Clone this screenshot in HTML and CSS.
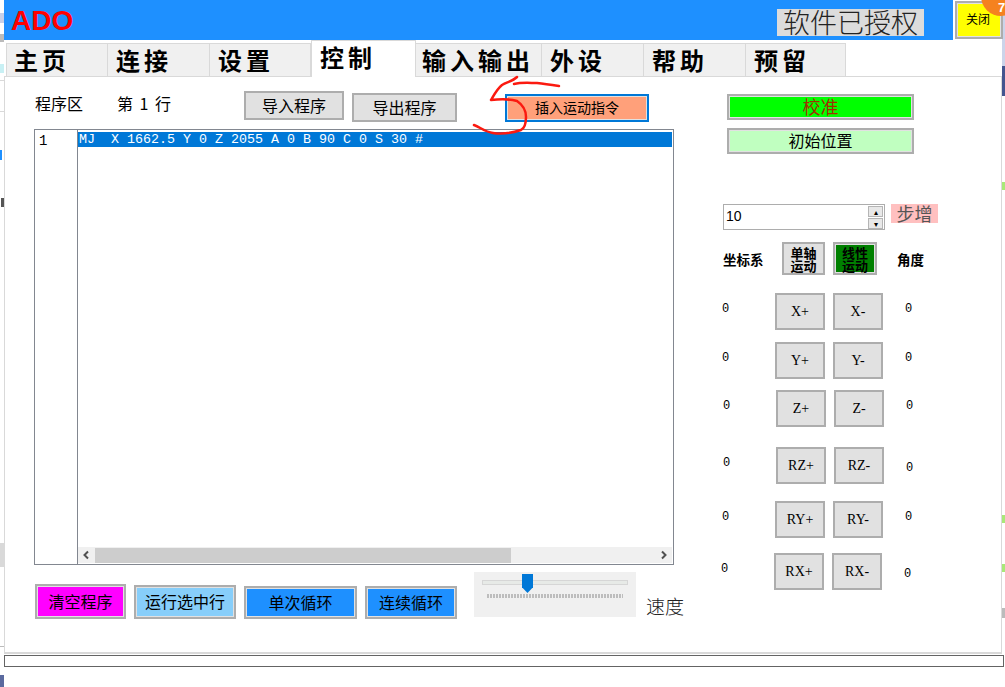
FILE: index.html
```html
<!DOCTYPE html>
<html lang="zh-CN">
<head>
    <meta charset="UTF-8">
    <title>ADO</title>
    <link rel="stylesheet" href="styles.css">
</head>
<body>
    <svg class="strip strip-left" width="4" height="687">
        <rect y="13" width="4" height="10" fill="#c8d0e8"/>
        <rect y="34" width="4" height="8" fill="#bbbbbb"/>
        <rect y="64" width="4" height="9" fill="#c8f0f4"/>
        <rect y="80" width="4" height="1" fill="#d9d9d9"/>
        <rect y="111" width="4" height="1" fill="#d9d9d9"/>
        <rect y="150" width="2" height="10" fill="#1e90ff"/>
        <rect x="1" y="198" width="3" height="9" fill="#555555"/>
        <rect y="543" width="4" height="24" fill="#d9d9d9"/>
        <rect y="646" width="4" height="1" fill="#bbbbbb"/>
        <rect y="675" width="4" height="12" fill="#5b6a9f"/>
    </svg>
    <svg class="strip strip-right" width="3" height="687">
        <rect y="15" width="3" height="51" fill="#ccd4ea"/>
        <rect y="66" width="3" height="30" fill="#44558f"/>
        <rect y="182" width="3" height="8" fill="#a8e878"/>
        <rect y="515" width="3" height="8" fill="#a8e878"/>
        <rect y="564" width="3" height="8" fill="#a8e878"/>
        <rect y="608" width="3" height="10" fill="#bbbbbb"/>
    </svg>

    <div class="window">
        <div class="header">
            <div class="title-bar">
                <span class="logo">ADO</span>
                <span class="licence">软件已授权</span>
            </div>
            <div class="close-btn">关闭</div>
        </div>
        <div class="badge">7</div>

        <div class="tabs">
            <div class="tab">主页</div>
            <div class="tab">连接</div>
            <div class="tab tab-narrow">设置</div>
            <div class="tab tab-active">控制</div>
            <div class="tab tab-wide">输入输出</div>
            <div class="tab">外设</div>
            <div class="tab">帮助</div>
            <div class="tab tab-last">预留</div>
        </div>

        <div class="panel">
            <div class="left-col">
                <div class="toolbar">
                    <span class="tool-label">程序区</span>
                    <span class="tool-label line-no">第 1 行</span>
                    <div class="btn btn-import">导入程序</div>
                    <div class="btn btn-export">导出程序</div>
                    <div class="btn btn-insert">插入运动指令</div>
                </div>
                <div class="editor">
                    <div class="gutter">1</div>
                    <div class="code">
                        <pre class="code-line">MJ  X 1662.5 Y 0 Z 2055 A 0 B 90 C 0 S 30 #</pre>
                        <div class="hscroll">
                            <svg class="arrow" width="17" height="16" fill="none" stroke="#505050" stroke-width="2"><path d="M10 4.500 L6.500 8 L10 11.500"/></svg>
                            <div class="hscroll-track"><div class="hscroll-thumb"></div></div>
                            <svg class="arrow" width="17" height="16" fill="none" stroke="#505050" stroke-width="2"><path d="M7 4.500 L10.500 8 L7 11.500"/></svg>
                        </div>
                    </div>
                </div>
                <div class="run-row">
                    <div class="btn fill fill-magenta btn-clear">清空程序</div>
                    <div class="btn fill fill-sky btn-run">运行选中行</div>
                    <div class="btn fill fill-blue btn-once">单次循环</div>
                    <div class="btn fill fill-blue btn-loop">连续循环</div>
                    <div class="slider">
                        <div class="slider-track"></div>
                        <div class="slider-thumb"></div>
                        <div class="slider-ticks"></div>
                    </div>
                    <span class="speed-label">速度</span>
                </div>
            </div>

            <div class="right-col">
                <div class="btn fill fill-green btn-calib">校准</div>
                <div class="btn fill fill-mint btn-home">初始位置</div>
                <div class="step-row">
                    <div class="spin">
                        <span class="spin-value">10</span>
                        <div class="spin-btns">
                            <span class="spin-btn">▴</span>
                            <span class="spin-btn">▾</span>
                        </div>
                    </div>
                    <span class="step-label">步增</span>
                </div>
                <div class="mode-row">
                    <span class="mode-label">坐标系</span>
                    <div class="btn mode-btn">单轴<br>运动</div>
                    <div class="btn fill mode-btn mode-active">线性<br>运动</div>
                    <span class="mode-label mode-angle">角度</span>
                </div>
                <div class="jog jog-x">
                    <span class="zero">0</span>
                    <div class="btn jog-btn">X+</div>
                    <div class="btn jog-btn">X-</div>
                    <span class="zero zero-right">0</span>
                </div>
                <div class="jog jog-y">
                    <span class="zero">0</span>
                    <div class="btn jog-btn">Y+</div>
                    <div class="btn jog-btn">Y-</div>
                    <span class="zero zero-right">0</span>
                </div>
                <div class="jog jog-z">
                    <span class="zero">0</span>
                    <div class="btn jog-btn">Z+</div>
                    <div class="btn jog-btn">Z-</div>
                    <span class="zero zero-right">0</span>
                </div>
                <div class="jog jog-rz">
                    <span class="zero">0</span>
                    <div class="btn jog-btn">RZ+</div>
                    <div class="btn jog-btn">RZ-</div>
                    <span class="zero zero-right zero-low">0</span>
                </div>
                <div class="jog jog-ry">
                    <span class="zero">0</span>
                    <div class="btn jog-btn">RY+</div>
                    <div class="btn jog-btn">RY-</div>
                    <span class="zero zero-right">0</span>
                </div>
                <div class="jog jog-rx">
                    <span class="zero">0</span>
                    <div class="btn jog-btn">RX+</div>
                    <div class="btn jog-btn">RX-</div>
                    <span class="zero zero-right zero-low">0</span>
                </div>
            </div>
        </div>

        <div class="status-bar"></div>
    </div>

    <!-- red pen mark someone drew on the screenshot -->
    <svg class="pen-mark" width="1005" height="160" fill="none" stroke="#fb1a10" stroke-width="2.5" stroke-linecap="round" stroke-linejoin="round">
        <path d="M517 77 C513 81 507 82 502 85 C497 89 494 95 491 100 C499 99 510 99 517 101 C523 105 526 111 526 117 C526 123 525 128 521 130 C512 133 500 134 493 133 C485 132 480 127 474 125"/>
        <path d="M514 84 C522 82 530 83 537 83 C545 84 552 85 559 86"/>
    </svg>
</body>
</html>
```

FILE: styles.css
```css
html, body {
    margin: 0;
    padding: 0;
}
body {
    width: 1005px;
    height: 687px;
    overflow: hidden;
    position: relative;
    background: #fff;
    color: #000;
    font-family: "Noto Sans CJK SC", "Liberation Sans", sans-serif;
}
.strip {
    position: absolute;
    top: 0;
}
.strip-left { left: 0; }
.strip-right { right: 0; }
.pen-mark {
    position: absolute;
    top: 0;
    left: 0;
    pointer-events: none;
}
.window {
    width: 1000px;
    margin-left: 4px;
    position: relative;
}

/* header */
.header {
    display: flex;
    height: 40px;
}
.title-bar {
    width: 949px;
    background: #1e90ff;
    display: flex;
    justify-content: space-between;
    box-sizing: border-box;
    padding: 0 29px 0 7px;
}
.logo {
    color: #f00;
    font: bold 28px/42px "Liberation Sans", sans-serif;
}
.licence {
    align-self: flex-start;
    margin-top: 9px;
    width: 147px;
    height: 27px;
    background: #dcdcdc;
    color: #222;
    font-size: 27px;
    font-weight: 300;
    line-height: 26px;
    text-align: center;
    white-space: nowrap;
}
.close-btn {
    margin: 1px 0 0 2px;
    width: 48px;
    height: 38px;
    box-sizing: border-box;
    background: #ff0;
    border: 2px solid #adadad;
    box-shadow: inset 0 0 0 1px #e1e1e1;
    font-size: 12px;
    line-height: 32px;
    text-align: center;
    padding-right: 2px;
}
.badge {
    position: absolute;
    top: -24px;
    left: 977px;
    width: 40px;
    height: 40px;
    box-sizing: border-box;
    padding: 26px 0 0 17px;
    border-radius: 50%;
    background: #f5821f;
    color: #fff;
    font: bold 13px/12px "Liberation Sans", sans-serif;
}

/* tabs */
.tabs {
    display: flex;
    align-items: flex-end;
    height: 37px;
    padding-left: 2px;
    margin-bottom: -1px;
    position: relative;
}
.tab {
    width: 102px;
    height: 34px;
    box-sizing: border-box;
    padding-left: 8px;
    background: #f0f0f0;
    border: 1px solid #d9d9d9;
    border-left: 0;
    font-size: 24px;
    font-weight: bold;
    letter-spacing: 4px;
    line-height: 31px;
    white-space: nowrap;
}
.tab:first-child {
    border-left: 1px solid #d9d9d9;
    padding-left: 7px;
}
.tab-narrow {
    width: 101px;
}
.tab-last {
    width: 100px;
}
.tab-active {
    width: 105px;
    height: 37px;
    background: #fff;
    border-bottom: 0;
    border-left: 1px solid #d9d9d9;
    line-height: 32px;
}
.tab-wide {
    width: 126px;
    padding-left: 6px;
}

/* panel */
.panel {
    display: flex;
    width: 998px;
    height: 578px;
    box-sizing: border-box;
    border: 1px solid #d9d9d9;
    border-bottom-width: 2px;
    padding-left: 29px;
}
.status-bar {
    width: 1000px;
    height: 12px;
    margin-top: 1px;
    box-sizing: border-box;
    border: 1px solid #646464;
}

/* buttons */
.btn {
    box-sizing: border-box;
    background: #e1e1e1;
    border: 2px solid #adadad;
    display: flex;
    align-items: center;
    justify-content: center;
    text-align: center;
    font-size: 16px;
    flex: none;
    padding-bottom: 2px;
}
.fill {
    box-shadow: inset 0 0 0 1px #e1e1e1;
}
.fill-magenta { background: #f0f; }
.fill-sky { background: #87cefa; }
.fill-blue { background: #1e90ff; }
.fill-green { background: #0f0; color: #a03000; font-size: 18px; }
.fill-mint { background: #c0ffc0; }

/* left column */
.left-col {
    width: 640px;
}
.toolbar {
    display: flex;
    align-items: flex-start;
    height: 52px;
    padding-left: 1px;
    box-sizing: border-box;
    font-size: 16px;
}
.tool-label {
    margin-top: 14px;
    line-height: 24px;
    white-space: nowrap;
}
.line-no {
    margin-left: 34px;
    width: 127px;
    word-spacing: 3px;
}
.btn-import {
    width: 100px;
    height: 29px;
    margin-top: 14px;
}
.btn-export {
    width: 105px;
    height: 29px;
    margin: 16px 0 0 8px;
}
.btn-insert {
    width: 144px;
    height: 28px;
    margin: 17px 0 0 48px;
    background: #ffa07a;
    border-color: #0078d7;
    box-shadow: inset 0 0 0 1px #e1e1e1;
    font-size: 14px;
}
.editor {
    display: flex;
    height: 436px;
    box-sizing: border-box;
    border: 1px solid #828790;
}
.gutter {
    width: 43px;
    flex: none;
    border-right: 1px solid #828790;
    padding: 2px 0 0 4px;
    box-sizing: border-box;
    font: 14px/18px "Liberation Mono", monospace;
}
.code {
    flex: 1;
    display: flex;
    flex-direction: column;
    justify-content: space-between;
    padding-top: 2px;
    min-width: 0;
}
.code-line {
    margin: 0 1px 0 0;
    height: 15px;
    padding-left: 1px;
    background: #0078d7;
    color: #fff;
    font: 13.33px/15px "Liberation Mono", monospace;
    white-space: pre;
}
.hscroll {
    display: flex;
    align-items: center;
    height: 16px;
    margin: 0 1px 1px 0;
    background: #f0f0f0;
}
.arrow {
    flex: none;
}
.hscroll-track {
    flex: 1;
    height: 15px;
}
.hscroll-thumb {
    width: 416px;
    height: 100%;
    background: #cdcdcd;
}
.run-row {
    display: flex;
    align-items: flex-end;
    gap: 8px;
    height: 47px;
    margin-top: 7px;
    padding-left: 1px;
}
.btn-clear { width: 91px; height: 35px; }
.btn-run { width: 102px; height: 34px; }
.btn-once { width: 113px; height: 33px; }
.btn-loop { width: 92px; height: 33px; }
.slider {
    position: relative;
    flex: none;
    width: 162px;
    height: 45px;
    margin: 0 2px 2px 9px;
    background: #f0f0f0;
}
.slider-track {
    position: absolute;
    left: 8px;
    right: 8px;
    top: 8px;
    height: 3px;
    background: #e7eae7;
    border: 1px solid #d6d6d6;
}
.slider-thumb {
    position: absolute;
    left: 48px;
    top: 2px;
    width: 11px;
    height: 19px;
    background: #0078d7;
    clip-path: polygon(0 0, 100% 0, 100% 70%, 50% 100%, 0 70%);
}
.slider-ticks {
    position: absolute;
    left: 13px;
    width: 136px;
    top: 22px;
    height: 4px;
    background: repeating-linear-gradient(90deg, #bdbdbd 0, #bdbdbd 2px, #f0f0f0 2px, #f0f0f0 3px);
}
.speed-label {
    font-size: 19px;
    font-weight: 300;
    line-height: 20px;
    color: #222;
    white-space: nowrap;
    margin-bottom: 3px;
}

/* right column */
.right-col {
    margin-left: 49px;
    padding-top: 17px;
    width: 230px;
}
.btn-calib, .btn-home {
    width: 187px;
    height: 26px;
    margin-left: 4px;
}
.btn-home {
    margin-top: 8px;
}
.step-row {
    display: flex;
    align-items: flex-start;
    margin-top: 50px;
}
.spin {
    display: flex;
    justify-content: space-between;
    width: 162px;
    height: 26px;
    box-sizing: border-box;
    border: 1px solid #adadad;
    padding: 1px 1px 1px 2px;
}
.spin-value {
    font: 14px/20px "Liberation Sans", sans-serif;
}
.spin-btns {
    display: flex;
    flex-direction: column;
    gap: 1px;
    width: 15px;
}
.spin-btn {
    flex: 1;
    background: #e8e8e8;
    border: 1px solid #b5b5b5;
    color: #000;
    font-size: 8px;
    line-height: 9px;
    text-align: center;
}
.step-label {
    margin-left: 6px;
    width: 47px;
    height: 19px;
    background: #ffc0c0;
    color: #555;
    font-size: 18px;
    line-height: 19px;
    text-align: center;
}
.mode-row {
    display: flex;
    align-items: center;
    margin-top: 12px;
    height: 33px;
}
.mode-label {
    width: 59px;
    flex: none;
    font-size: 13.500px;
    font-weight: bold;
    white-space: nowrap;
}
.mode-angle {
    margin-left: 20px;
}
.mode-btn {
    width: 43px;
    height: 33px;
    padding: 0;
    font-size: 13px;
    font-weight: bold;
    line-height: 13px;
}
.mode-active {
    width: 44px;
    margin-left: 8px;
    background: #008000;
}
.jog {
    display: flex;
    align-items: flex-start;
    height: 37px;
    margin-left: -1px;
}
.jog-x { margin-top: 18px; }
.jog-y { margin-top: 12px; }
.jog-z { margin-top: 11px; margin-left: 0; }
.jog-rz { margin-top: 20px; margin-left: 0; }
.jog-ry { margin-top: 17px; }
.jog-rx { margin-top: 15px; margin-left: -2px; }
.zero {
    width: 53px;
    flex: none;
    margin-top: 9px;
    font: 12px/14px "Liberation Mono", monospace;
}
.zero-right {
    width: auto;
    margin-left: 22px;
}
.zero-low {
    margin-top: 14px;
}
.jog-btn {
    width: 50px;
    height: 37px;
    padding: 0;
    font: 14px "Liberation Serif", serif;
}
.jog-btn + .jog-btn {
    margin-left: 8px;
}
```
